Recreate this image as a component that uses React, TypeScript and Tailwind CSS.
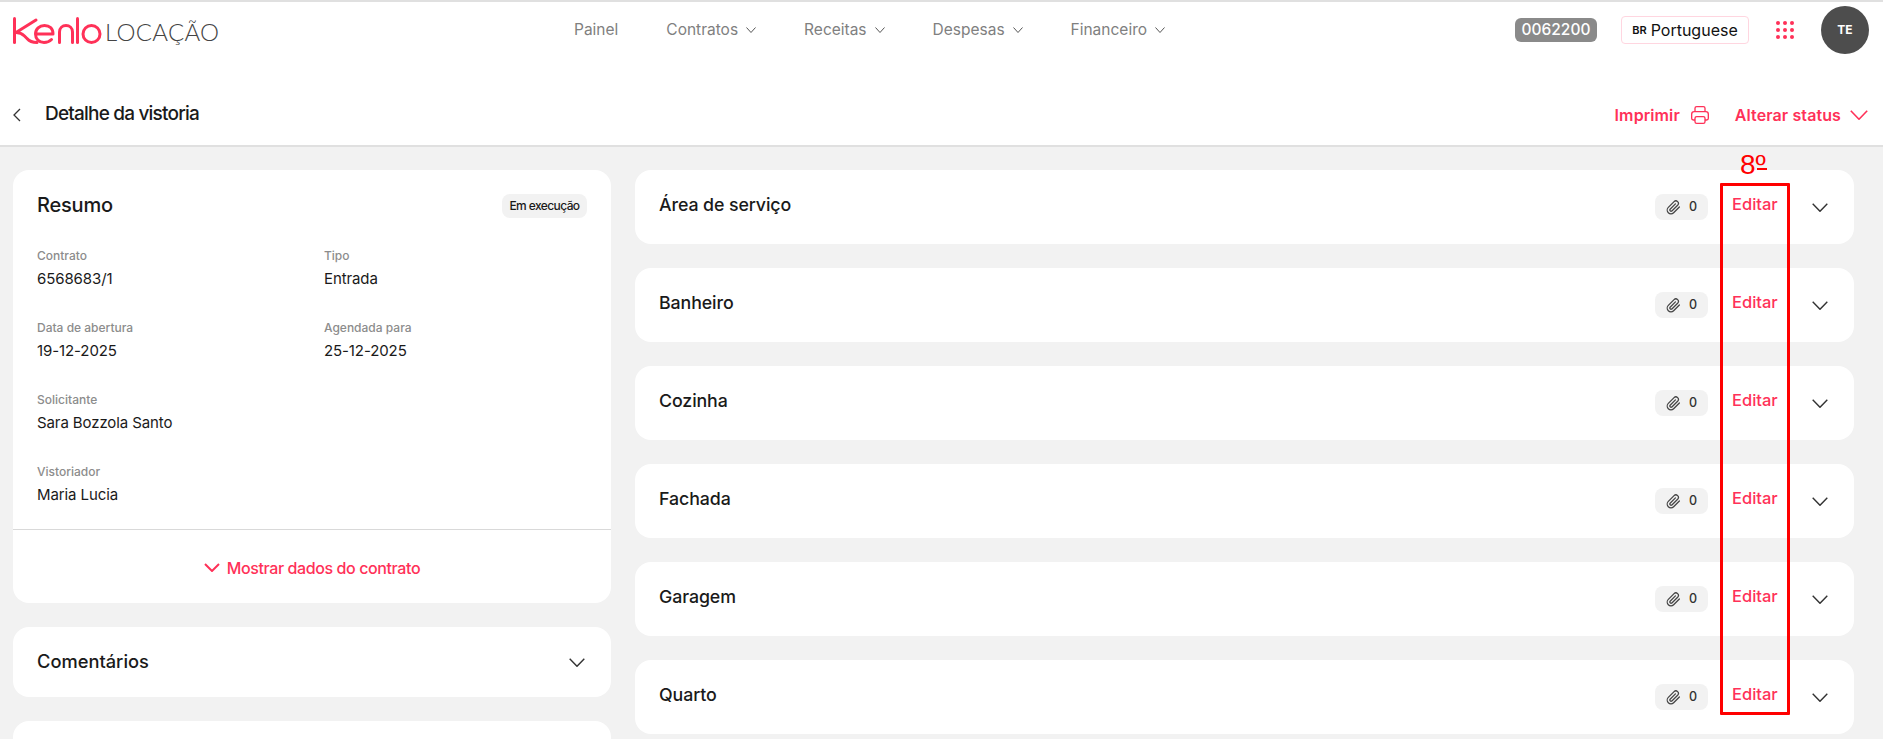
import React from "react";

const F = "font-['Inter','Liberation_Sans',sans-serif]";

function Chev({ className = "", w = 16, h = 9, sw = 1.4 }: { className?: string; w?: number; h?: number; sw?: number }) {
  return (
    <svg width={w} height={h} viewBox={`0 0 ${w} ${h}`} fill="none" className={className}>
      <path d={`M${sw / 2} ${sw / 2}L${w / 2} ${h - sw / 2}L${w - sw / 2} ${sw / 2}`} stroke="currentColor" strokeWidth={sw} />
    </svg>
  );
}

function Logo() {
  return (
    <svg width="89" height="27" viewBox="0 0 89 27" fill="none" stroke="#ff3158" strokeWidth="3" strokeLinecap="round" strokeLinejoin="round">
      <path d="M1.5 1.5V25.5" />
      <path d="M23 3L3 15.5C7 15.5 9 16.5 11.5 19L14 21.5C16.5 24.5 20 25.5 24 25.5" />
      <path d="M22.5 17H40C40 11.5 36.5 8.5 31.5 8.5C26.5 8.5 22.5 12 22.5 17C22.5 22 26 25.5 31 25.5C34 25.5 36.5 24.5 38.5 22.5" />
      <path d="M46.5 25.5V15C46.5 11 49.5 8.5 53 8.5C56.5 8.5 59.5 11 59.5 15V25.5" />
      <path d="M64.5 1.5V25.5" />
      <circle cx="78.5" cy="17" r="8.5" />
    </svg>
  );
}

function Field({ label, value }: { label: string; value: string }) {
  return (
    <div className="h-[48px]">
      <div className="text-[12px] leading-[16px] font-medium text-[#8c8c8c]">{label}</div>
      <div className="mt-[4px] text-[15px] leading-[22px] text-[#1a1a1a] tracking-[-0.1px]">{value}</div>
    </div>
  );
}

function Clip() {
  return (
    <svg width="15" height="15" viewBox="0 0 24 24" fill="none" stroke="#444" strokeWidth="2" strokeLinecap="round" strokeLinejoin="round">
      <path d="M21.4 11.1l-9.2 9.2a6 6 0 0 1-8.5-8.5l9.2-9.2a4 4 0 0 1 5.7 5.7l-9.2 9.2a2 2 0 0 1-2.8-2.8l8.5-8.5" />
    </svg>
  );
}

function Row({ title }: { title: string }) {
  return (
    <div className="flex h-[74px] shrink-0 items-center rounded-[16px] bg-white pl-6 pr-[26px]">
      <span className="mb-[3px] text-[17.8px] font-medium tracking-[-0.1px] text-[#1a1a1a]">{title}</span>
      <div className="ml-auto flex h-[26px] w-[53px] items-center justify-center gap-[8px] rounded-[8px] bg-[#f2f2f2] text-[12.5px] font-medium text-[#333]">
        <Clip />
        <span>0</span>
      </div>
      <span className="mb-[6px] ml-[24px] w-[46px] text-[16.5px] font-medium text-[#ff3158]">Editar</span>
      <Chev className="ml-[34px] text-[#333]" />
    </div>
  );
}

function Nav({ label, caret = true }: { label: string; caret?: boolean }) {
  return (
    <div className="flex items-center gap-[8px] text-[15.5px] text-[#808080]">
      <span>{label}</span>
      {caret && <Chev w={10} h={6} sw={1} className="text-[#555]" />}
    </div>
  );
}

export default function App() {
  return (
    <div className={`${F} relative h-[739px] w-[1883px] overflow-hidden bg-[#f2f2f2]`}>
      <header className="h-[147px] border-y-2 border-[#e0e0e0] bg-white">
        <div className="flex h-[56px] items-center pl-[13px] pr-[14px]">
          <div className="flex w-[561px] items-center gap-[3px]">
            <Logo />
            <span className="mt-[3px] font-['Lato',sans-serif] text-[24px] font-light leading-none tracking-[0.3px] text-[#444]">LOCAÇÃO</span>
          </div>
          <nav className="flex items-center gap-12">
            <Nav label="Painel" caret={false} />
            <Nav label="Contratos" />
            <Nav label="Receitas" />
            <Nav label="Despesas" />
            <Nav label="Financeiro" />
          </nav>
          <div className="ml-auto flex items-center">
            <div className="flex h-[24px] w-[82px] items-center justify-center rounded-[6px] bg-[#8a8a8a] text-[15.5px] font-medium text-white">0062200</div>
            <div className="ml-[24px] flex h-[28px] w-[128px] items-center justify-center gap-[4px] rounded-[4px] border border-[#ffd6e0] text-[16px] text-[#111]">
              <span className="text-[11px] font-semibold">BR</span>
              <span>Portuguese</span>
            </div>
            <div className="ml-[27px] grid grid-cols-3 gap-[3px]">
              {Array.from({ length: 9 }).map((_, i) => (
                <span key={i} className="h-[4px] w-[4px] rounded-full bg-[#ff3158]" />
              ))}
            </div>
            <div className="ml-[27px] flex h-[48px] w-[48px] items-center justify-center rounded-full bg-[#4d4d4d] text-[12px] font-bold text-white">TE</div>
          </div>
        </div>
        <div className="flex h-[87px] items-center pl-[13px] pr-[15px] pt-[26px]">
          <svg width="8" height="14" viewBox="0 0 8 14" fill="none" className="text-[#333]">
            <path d="M7 1L1 7L7 13" stroke="currentColor" strokeWidth="1.3" />
          </svg>
          <h1 className="ml-[24px] text-[19px] font-medium tracking-[-0.8px] text-[#1a1a1a]">Detalhe da vistoria</h1>
          <div className="ml-auto flex items-center text-[16px] font-semibold tracking-[0.1px] text-[#ff3158]">
            <span>Imprimir</span>
            <svg width="20" height="20" viewBox="0 0 24 24" fill="none" stroke="currentColor" strokeWidth="1.6" strokeLinejoin="round" className="ml-[10px]">
              <path d="M6 8V4a2 2 0 0 1 2-2h8a2 2 0 0 1 2 2v4" />
              <path d="M6 18H4a2 2 0 0 1-2-2v-5a3 3 0 0 1 3-3h14a3 3 0 0 1 3 3v5a2 2 0 0 1-2 2h-2" />
              <rect x="6" y="14" width="12" height="8" rx="2" />
            </svg>
            <span className="ml-[25px]">Alterar status</span>
            <Chev w={18} h={10} sw={1.6} className="ml-[9px]" />
          </div>
        </div>
      </header>

      <main className="flex items-start gap-6 pl-[13px] pr-[29px] pt-[23px]">
        <div className="flex w-[598px] shrink-0 flex-col gap-6">
          <section className="rounded-[16px] bg-white">
            <div className="h-[360px] border-b border-[#d9d9d9] px-6">
              <div className="flex h-[72px] items-center justify-between">
                <h2 className="mb-[2px] text-[20px] font-medium tracking-[-0.2px] text-[#1a1a1a]">Resumo</h2>
                <span className="flex h-[24px] w-[85px] items-center justify-center rounded-[8px] bg-[#f2f2f2] text-[12px] font-medium tracking-[-0.6px] text-[#1a1a1a]">Em execução</span>
              </div>
              <div className="mt-[6px] grid grid-cols-2 gap-x-6 gap-y-[24px]">
                <Field label="Contrato" value="6568683/1" />
                <Field label="Tipo" value="Entrada" />
                <Field label="Data de abertura" value="19-12-2025" />
                <Field label="Agendada para" value="25-12-2025" />
                <Field label="Solicitante" value="Sara Bozzola Santo" />
                <div />
                <Field label="Vistoriador" value="Maria Lucia" />
              </div>
            </div>
            <div className="flex h-[73px] items-center justify-center gap-[7px] pt-[2px] text-[16px] font-medium tracking-[-0.4px] text-[#ff3158]">
              <Chev w={16} h={9} sw={2} />
              <span>Mostrar dados do contrato</span>
            </div>
          </section>
          <section className="flex h-[70px] items-center justify-between rounded-[16px] bg-white pl-6 pr-[26px]">
            <span className="text-[18.3px] font-medium text-[#1a1a1a]">Comentários</span>
            <Chev className="text-[#333]" />
          </section>
          <section className="h-[70px] rounded-[16px] bg-white" />
        </div>
        <div className="flex min-w-0 flex-1 flex-col gap-6">
          {["Área de serviço", "Banheiro", "Cozinha", "Fachada", "Garagem", "Quarto"].map((t) => (
            <Row key={t} title={t} />
          ))}
        </div>
      </main>

      <div className="absolute left-[1720px] top-[183px] h-[532px] w-[70px] rounded-[1px] border-[3px] border-[#ff0000]" />
      <div className="absolute left-[1740px] top-[147px] font-['Liberation_Sans',sans-serif] text-[28px] leading-[36px] text-[#ff0000]">8º</div>
      <div className="absolute left-[1757px] top-[168px] h-[2px] w-[10px] bg-[#ff0000]" />
    </div>
  );
}
